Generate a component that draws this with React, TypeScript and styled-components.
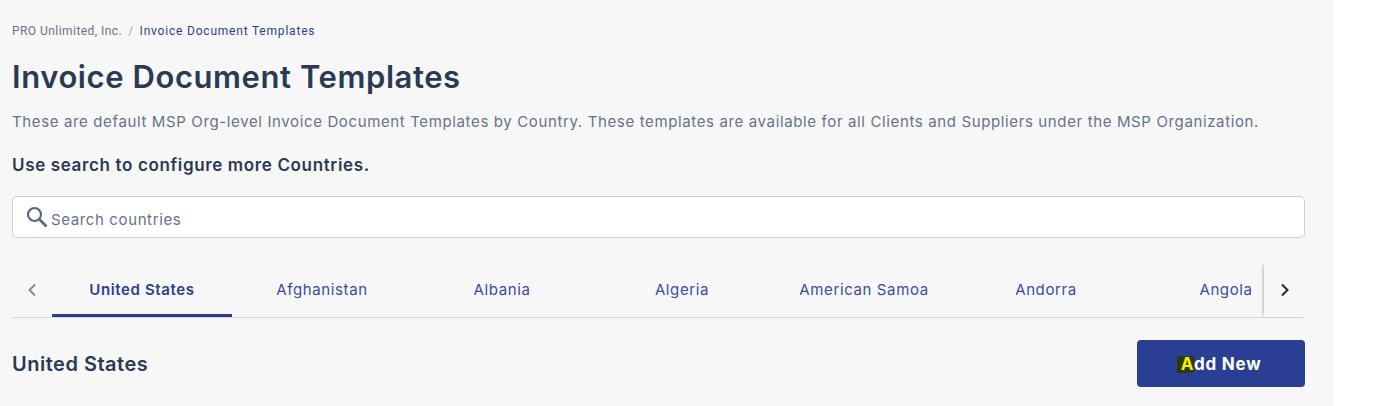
import * as React from 'react'
import styled, { createGlobalStyle } from 'styled-components'

const GlobalStyle = createGlobalStyle`
  html, body {
    margin: 0;
    padding: 0;
    background: #fff;
    font-family: 'Inter', 'Open Sans', sans-serif;
  }
`

const Page = styled.div`
  width: 1333px;
  height: 406px;
  box-sizing: border-box;
  padding: 22px 28px 0 12px;
  background: #f7f7f7;
  overflow: hidden;
`

const Breadcrumbs = styled.nav`
  display: flex;
  align-items: center;
  height: 18px;
  font-family: 'Roboto', sans-serif;
  font-size: 12px;
  letter-spacing: 0.45px;
  color: #67728a;
`

const Separator = styled.span`
  margin: 0 6px;
  color: #a5abb8;
`

const Current = styled.span`
  color: #2a3e94;
  letter-spacing: 0.8px;
  font-weight: 400;
`

const Title = styled.h1`
  margin: 17px 0 0;
  font-size: 31px;
  line-height: 40px;
  font-weight: 600;
  color: #2a3a55;
  letter-spacing: 0.58px;
`

const Description = styled.p`
  margin: 14px 0 0;
  font-size: 15px;
  line-height: 22px;
  color: #67728a;
  letter-spacing: 0.63px;
`

const Hint = styled.p`
  margin: 21px 0 0;
  font-size: 17px;
  line-height: 22px;
  font-weight: 600;
  color: #2a3a55;
  letter-spacing: 0.64px;
`

const SearchBox = styled.div`
  display: flex;
  align-items: center;
  gap: 3px;
  height: 42px;
  box-sizing: border-box;
  margin-top: 20px;
  padding: 0 13px;
  background: #fff;
  border: 1px solid #c9d0da;
  border-radius: 5px;
`

const SearchInput = styled.input`
  flex: 1;
  border: 0;
  outline: 0;
  padding: 4px 0 0;
  background: transparent;
  font-family: inherit;
  font-size: 15px;
  letter-spacing: 0.62px;
  color: #2a3a55;

  &::placeholder {
    color: #67728a;
    opacity: 1;
  }
`

const TabBar = styled.div`
  display: flex;
  align-items: stretch;
  height: 54px;
  margin-top: 25px;
  border-bottom: 1px solid #d6d8dc;
`

const ArrowButton = styled.button<{ $end?: boolean }>`
  flex: none;
  display: flex;
  align-items: center;
  justify-content: center;
  width: ${p => (p.$end ? '41px' : '40px')};
  padding: 0;
  border: 0;
  background: transparent;
  color: ${p => (p.$end ? '#27272a' : '#8b8b8b')};
  box-shadow: ${p => (p.$end ? '-3px 0 3px -2px rgba(0, 0, 0, 0.25)' : 'none')};
`

const TabScroller = styled.div`
  flex: 1;
  display: flex;
  min-width: 0;
  overflow: hidden;
`

const Tab = styled.div<{ $active?: boolean; $wide?: boolean }>`
  flex: none;
  display: flex;
  align-items: center;
  justify-content: center;
  box-sizing: border-box;
  width: ${p => (p.$wide ? '184px' : '180px')};
  padding-top: 1px;
  font-size: 15px;
  letter-spacing: 0.62px;
  font-weight: ${p => (p.$active ? 600 : 400)};
  color: ${p => (p.$active ? '#2a3e94' : '#3a4d9c')};
  white-space: nowrap;
  border-bottom: 3px solid ${p => (p.$active ? '#2a3e94' : 'transparent')};
`

const SectionHeader = styled.div`
  display: flex;
  align-items: center;
  justify-content: space-between;
  margin-top: 22px;
`

const SectionTitle = styled.h2`
  margin: 0;
  font-size: 20px;
  font-weight: 600;
  color: #2a3a55;
  letter-spacing: 0.5px;
`

const AddButton = styled.button`
  width: 168px;
  height: 47px;
  padding: 0;
  border: 0;
  border-radius: 4px;
  background: #2a3e94;
  color: #fff;
  font-family: inherit;
  font-size: 17px;
  font-weight: 700;
  letter-spacing: 0.75px;
`

const Highlight = styled.span`
  display: inline-block;
  padding-left: 4px;
  margin-left: -4px;
  line-height: 17px;
  background: #2c3a04;
  color: #f5f000;
`

const tabs = ['Afghanistan', 'Albania', 'Algeria', 'American Samoa', 'Andorra', 'Angola']

export default function App() {
  return (
    <Page>
      <GlobalStyle />
      <Breadcrumbs>
        PRO Unlimited, Inc.
        <Separator>/</Separator>
        <Current>Invoice Document Templates</Current>
      </Breadcrumbs>
      <Title>Invoice Document Templates</Title>
      <Description>
        These are default MSP Org-level Invoice Document Templates by Country. These templates are
        available for all Clients and Suppliers under the MSP Organization.
      </Description>
      <Hint>Use search to configure more Countries.</Hint>
      <SearchBox>
        <svg width="22" height="22" viewBox="0 0 22 22" fill="none" stroke="#5a6780" strokeWidth="2.2">
          <circle cx="8.5" cy="8.5" r="6.5" />
          <path d="M13.5 13.5 L20.5 20.5" strokeWidth="2.6" />
        </svg>
        <SearchInput placeholder="Search countries" />
      </SearchBox>
      <TabBar>
        <ArrowButton>
          <svg width="12" height="14" viewBox="0 0 12 14" fill="none" stroke="currentColor" strokeWidth="2">
            <path d="M9 1.5 L3.5 7 L9 12.5" />
          </svg>
        </ArrowButton>
        <TabScroller>
          <Tab $active>United States</Tab>
          {tabs.map(name => (
            <Tab key={name} $wide={name === 'American Samoa'}>
              {name}
            </Tab>
          ))}
        </TabScroller>
        <ArrowButton $end>
          <svg width="12" height="14" viewBox="0 0 12 14" fill="none" stroke="currentColor" strokeWidth="2">
            <path d="M3 1.5 L8.5 7 L3 12.5" />
          </svg>
        </ArrowButton>
      </TabBar>
      <SectionHeader>
        <SectionTitle>United States</SectionTitle>
        <AddButton>
          <Highlight>A</Highlight>dd New
        </AddButton>
      </SectionHeader>
    </Page>
  )
}
